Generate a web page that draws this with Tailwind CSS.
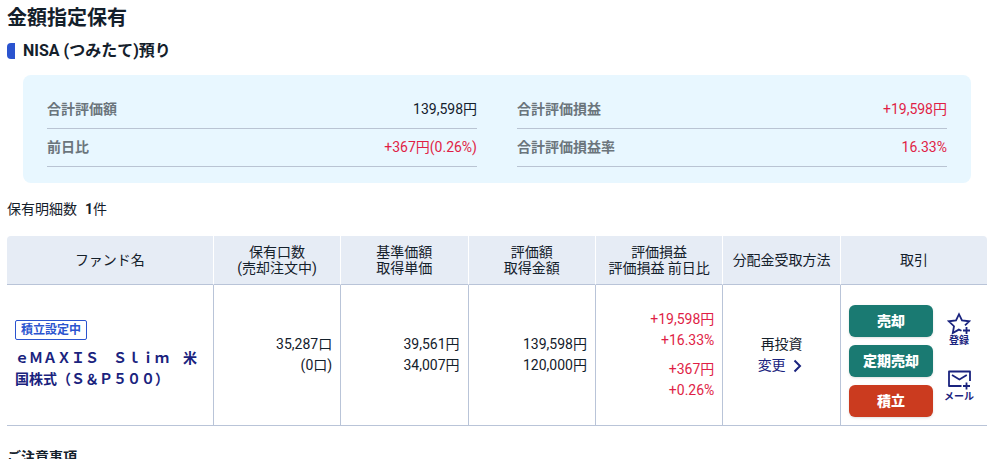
<!DOCTYPE html>
<html lang="ja">
<head>
  <meta charset="UTF-8" />
  <meta name="viewport" content="width=device-width, initial-scale=1" />
  <title>金額指定保有</title>
  <script src="https://cdn.jsdelivr.net/npm/@tailwindcss/browser@4"></script>
</head>
<body class="bg-white text-[#14202b] text-sm font-[Roboto,'Noto_Sans_CJK_JP',sans-serif]">

  <main class="pl-[7px] pr-[13px] pt-1">

    <!-- Headings -->
    <h1 class="text-xl leading-7 font-bold">金額指定保有</h1>
    <h2 class="mt-[9px] flex items-center gap-2 text-base leading-5 font-bold">
      <span class="w-2 h-4 rounded-l bg-[#2b54cf]"></span>
      NISA (つみたて)預り
    </h2>

    <!-- Summary -->
    <dl class="mt-[14px] mx-4 grid grid-cols-2 gap-x-10 rounded-lg bg-[#e8f7ff] px-6 py-4 leading-5">
      <div class="flex justify-between border-b border-[#b9c4d3] pt-2 pb-[9px]">
        <dt class="font-bold text-[#6b757c]">合計評価額</dt>
        <dd>139,598円</dd>
      </div>
      <div class="flex justify-between border-b border-[#b9c4d3] pt-2 pb-[9px]">
        <dt class="font-bold text-[#6b757c]">合計評価損益</dt>
        <dd class="text-[#e01e46]">+19,598円</dd>
      </div>
      <div class="flex justify-between border-b border-[#b9c4d3] pt-2 pb-[9px]">
        <dt class="font-bold text-[#6b757c]">前日比</dt>
        <dd class="text-[#e01e46]">+367円(0.26%)</dd>
      </div>
      <div class="flex justify-between border-b border-[#b9c4d3] pt-2 pb-[9px]">
        <dt class="font-bold text-[#6b757c]">合計評価損益率</dt>
        <dd class="text-[#e01e46]">16.33%</dd>
      </div>
    </dl>

    <p class="mt-4 leading-5">保有明細数<span class="ml-2 font-bold">1</span>件</p>

    <!-- Holdings -->
    <table class="mt-[17px] w-full table-fixed border-separate border-spacing-0">
      <thead>
        <tr class="h-[49px] leading-4 *:border-b *:border-b-[#b9c4d8] *:bg-[#e6ecf5] *:p-0 *:font-normal">
          <th scope="col" class="w-[21.1%] rounded-tl border-r border-r-white">ファンド名</th>
          <th scope="col" class="w-[13%] border-r border-r-white">保有口数<br />(売却注文中)</th>
          <th scope="col" class="w-[13%] border-r border-r-white">基準価額<br />取得単価</th>
          <th scope="col" class="w-[13%] border-r border-r-white">評価額<br />取得金額</th>
          <th scope="col" class="w-[13%] border-r border-r-white">評価損益<br />評価損益 前日比</th>
          <th scope="col" class="w-[12%] border-r border-r-white">分配金受取方法</th>
          <th scope="col" class="rounded-tr">取引</th>
        </tr>
      </thead>
      <tbody>
        <tr class="h-[141px] leading-[21px] *:border-b *:border-[#b9c4d8] *:px-2 *:py-0">
          <td class="border-r">
            <span class="block w-fit rounded-xs border border-[#2b54cf] px-[5px] text-xs leading-[18px] font-bold text-[#2b54cf]">積立設定中</span>
            <a href="#" class="mt-2 block font-bold text-[#1a237e]">ｅＭＡＸＩＳ　Ｓｌｉｍ　米国株式（Ｓ＆Ｐ５００）</a>
          </td>
          <td class="border-r text-right">35,287口<br />(0口)</td>
          <td class="border-r text-right">39,561円<br />34,007円</td>
          <td class="border-r text-right">139,598円<br />120,000円</td>
          <td class="border-r text-right text-[#e01e46]">
            <p>+19,598円<br />+16.33%</p>
            <p class="mt-2">+367円<br />+0.26%</p>
          </td>
          <td class="border-r text-center">
            再投資<br />
            <a href="#" class="inline-flex items-center gap-1 text-[#1a237e]">
              変更
              <svg class="size-4" viewBox="0 0 16 16" fill="none" stroke="currentColor" stroke-width="2"><path d="M4.5 2.5l5.5 5.5-5.5 5.5" /></svg>
            </a>
          </td>
          <td>
            <div class="mt-3 flex gap-2">
              <div class="flex w-[84px] flex-col gap-2">
                <button type="button" class="h-8 rounded-md bg-[#1a7a72] font-black text-white shadow">売却</button>
                <button type="button" class="h-8 rounded-md bg-[#1a7a72] font-black text-white shadow">定期売却</button>
                <button type="button" class="h-8 rounded-md bg-[#cb3b1f] font-black text-white shadow">積立</button>
              </div>
              <div class="flex flex-col items-center gap-5 pt-1.5 text-[10px] leading-3 font-bold text-[#1a237e]">
                <a href="#" class="flex w-9 flex-col items-center">
                  <svg class="size-6" viewBox="0 0 24 24" fill="none" stroke="currentColor" stroke-width="1.8"><path d="M14.5 19.8L11.8 18.6 5.8 22 7 15.2 1.8 10.3 9 9.4 12 3.2 15 9.4 22.2 10.3 18 14.4" /><path d="M19.5 16v7M16 19.5h7" /></svg>
                  登録
                </a>
                <a href="#" class="flex w-9 flex-col items-center">
                  <svg class="size-6" viewBox="0 0 24 24" fill="none" stroke="currentColor" stroke-width="1.8"><path d="M14.5 19H2V4.5h21V14" stroke-linejoin="round" /><path d="M5 8l7.4 4.4L19.8 8" /><path d="M19.5 15.5v7M16 19h7" /></svg>
                  メール
                </a>
              </div>
            </div>
          </td>
        </tr>
      </tbody>
    </table>

    <h2 class="mt-[21px] leading-5 font-bold">ご注意事項</h2>
  </main>

</body>
</html>
